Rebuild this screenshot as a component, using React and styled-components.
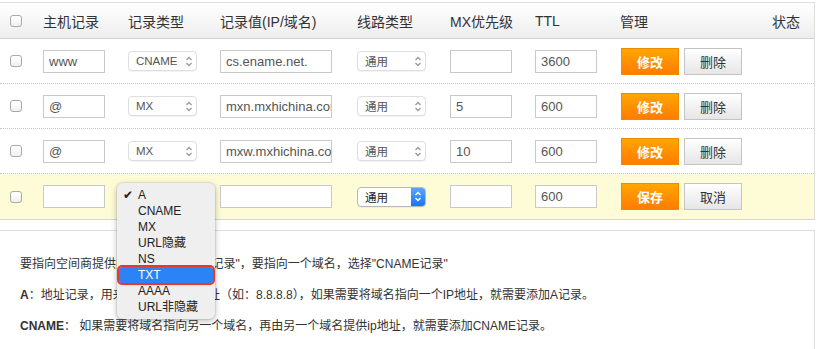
import React from "react"
import styled, { createGlobalStyle } from "styled-components"

const GlobalStyle = createGlobalStyle`
  body {
    margin: 0;
    background: #fff;
    font-family: "Liberation Sans", "Noto Sans CJK SC", sans-serif;
    color: #333;
  }
`

const cols = `43px 85px 92px 137px 93px 85px 85px 140px 1fr`

const Page = styled.div`
  width: 818px;
  height: 349px;
  overflow: hidden;
  padding-top: 2px;
  box-sizing: border-box;
`

const Table = styled.div`
  width: 815px;
  box-sizing: border-box;
  border-top: 1px solid #dedede;
  border-right: 1px solid #dedede;
  border-bottom: 1px solid #d4d4d4;
`

const HeadRow = styled.div`
  display: grid;
  grid-template-columns: ${cols};
  align-items: center;
  height: 35px;
  background: linear-gradient(#ffffff, #eeeeee);
  border-bottom: 1px solid #d2d2d2;
  font-size: 14px;
  color: #333;
`

const HeadCell = styled.div`
  text-align: ${p => (p.$right ? "right" : "left")};
  padding-right: ${p => (p.$right ? "14px" : "0")};
`

const Row = styled.div`
  display: grid;
  grid-template-columns: ${cols};
  align-items: center;
  height: 45px;
  box-sizing: border-box;
  background: ${p => (p.$editing ? "#fefcd6" : "#fff")};
  border-bottom: ${p => (p.$last ? "none" : "1px dotted #c8c8c8")};
`

const Cell = styled.div`
  position: relative;
  display: flex;
  align-items: center;
  gap: 5px;
`

const Check = styled.span`
  display: block;
  width: 12px;
  height: 12px;
  margin-left: 10px;
  box-sizing: border-box;
  border: 1px solid #a9a9a9;
  border-radius: 3px;
  background: linear-gradient(#ffffff, #f1f1f1);
`

const TextBox = styled.div`
  width: ${p => p.$w}px;
  height: 23px;
  box-sizing: border-box;
  border: 1px solid #c9c9c9;
  background: #fff;
  padding: 0 5px;
  font-size: 13px;
  line-height: 21px;
  color: #555;
  white-space: nowrap;
  overflow: hidden;
`

const SelectBox = styled.div`
  display: flex;
  align-items: center;
  width: 69px;
  height: 20px;
  box-sizing: border-box;
  border: 1px solid ${p => (p.$focus ? "#b8b8b8" : "#dedede")};
  border-radius: 4px;
  background: #fff;
  overflow: hidden;
  font-size: 11.5px;
  color: ${p => (p.$focus ? "#222" : "#555")};
  box-shadow: 0 1px 1px rgba(0, 0, 0, 0.05);
`

const SelectText = styled.span`
  flex: 1;
  padding-left: 7px;
  white-space: nowrap;
`

const Arrow = styled.span`
  display: flex;
  align-items: center;
  justify-content: center;
  flex-shrink: 0;
  width: 14px;
  height: 100%;
  background: ${p => (p.$focus ? "linear-gradient(#5aa6ff, #1a74f0)" : "transparent")};
  color: ${p => (p.$focus ? "#fff" : "#999")};
`

const Btn = styled.div`
  width: 58px;
  height: 27px;
  box-sizing: border-box;
  display: flex;
  align-items: center;
  justify-content: center;
  font-size: 13px;
  font-weight: ${p => (p.$primary ? "bold" : "normal")};
  color: ${p => (p.$primary ? "#fff" : "#333")};
  border: 1px solid ${p => (p.$primary ? "#f28a00" : "#c4c4c4")};
  background: ${p =>
    p.$primary
      ? "linear-gradient(#ffa600, #ff7c00)"
      : "linear-gradient(#ffffff, #e6e6e6)"};
  margin-left: ${p => (p.$primary ? "1px" : "0")};
`

const Menu = styled.div`
  position: absolute;
  left: -11px;
  top: -14px;
  width: 98px;
  padding: 4px 0;
  box-sizing: border-box;
  background: #efefef;
  border-radius: 6px;
  box-shadow: 0 2px 6px rgba(0, 0, 0, 0.28), 0 0 0 1px rgba(0, 0, 0, 0.06);
  z-index: 5;
`

const MenuItem = styled.div`
  position: relative;
  height: 16px;
  line-height: 16px;
  font-size: 12px;
  padding-left: 19px;
  margin: 0 2px;
  color: ${p => (p.$active ? "#fff" : "#222")};
  background: ${p => (p.$active ? "#2c83f6" : "transparent")};
  border-radius: ${p => (p.$active ? "3px" : "0")};
  outline: ${p => (p.$active ? "2px solid #e4392c" : "none")};
  box-shadow: ${p => (p.$active ? "0 1px 3px rgba(200,40,30,0.5)" : "none")};
`

const Tick = styled.span`
  position: absolute;
  left: 4px;
  top: 0;
  font-size: 12px;
`

const Notes = styled.div`
  margin-top: 10px;
  width: 815px;
  height: 200px;
  box-sizing: border-box;
  border-top: 1px solid #dedede;
  border-right: 1px solid #dedede;
  padding: 24px 0 0 20px;
`

const Note = styled.p`
  margin: 0 0 13px;
  font-size: 12px;
  line-height: 18px;
  color: #333;
`

const Chevrons = () => (
  <svg width="8" height="11" viewBox="0 0 8 11" fill="none" stroke="currentColor" strokeWidth="1.3">
    <path d="M1.5 4 L4 1.5 L6.5 4" />
    <path d="M1.5 7 L4 9.5 L6.5 7" />
  </svg>
)

const Select = ({ text, focus }) => (
  <SelectBox $focus={focus}>
    <SelectText>{text}</SelectText>
    <Arrow $focus={focus}>
      <Chevrons />
    </Arrow>
  </SelectBox>
)

const records = [
  { host: "www", type: "CNAME", value: "cs.ename.net.", mx: "", ttl: "3600" },
  { host: "@", type: "MX", value: "mxn.mxhichina.com", mx: "5", ttl: "600" },
  { host: "@", type: "MX", value: "mxw.mxhichina.com", mx: "10", ttl: "600" },
]

const types = ["A", "CNAME", "MX", "URL隐藏", "NS", "TXT", "AAAA", "URL非隐藏"]

export default () => {
  return (
    <Page>
      <GlobalStyle />
      <Table>
        <HeadRow>
          <HeadCell><Check /></HeadCell>
          <HeadCell>主机记录</HeadCell>
          <HeadCell>记录类型</HeadCell>
          <HeadCell>记录值(IP/域名)</HeadCell>
          <HeadCell>线路类型</HeadCell>
          <HeadCell>MX优先级</HeadCell>
          <HeadCell>TTL</HeadCell>
          <HeadCell>管理</HeadCell>
          <HeadCell $right>状态</HeadCell>
        </HeadRow>

        {records.map((r, i) => (
          <Row key={i}>
            <Cell><Check /></Cell>
            <Cell><TextBox $w={62}>{r.host}</TextBox></Cell>
            <Cell><Select text={r.type} /></Cell>
            <Cell><TextBox $w={112}>{r.value}</TextBox></Cell>
            <Cell><Select text="通用" /></Cell>
            <Cell><TextBox $w={62}>{r.mx}</TextBox></Cell>
            <Cell><TextBox $w={62}>{r.ttl}</TextBox></Cell>
            <Cell>
              <Btn $primary>修改</Btn>
              <Btn>删除</Btn>
            </Cell>
            <Cell />
          </Row>
        ))}

        {/* new record being added */}
        <Row $editing $last>
          <Cell><Check /></Cell>
          <Cell><TextBox $w={62} /></Cell>
          <Cell>
            <Menu>
              {types.map(t => (
                <MenuItem key={t} $active={t === "TXT"}>
                  {t === "A" && <Tick>✔</Tick>}
                  {t}
                </MenuItem>
              ))}
            </Menu>
          </Cell>
          <Cell><TextBox $w={112} /></Cell>
          <Cell><Select text="通用" focus /></Cell>
          <Cell><TextBox $w={62} /></Cell>
          <Cell><TextBox $w={62}>600</TextBox></Cell>
          <Cell>
            <Btn $primary>保存</Btn>
            <Btn>取消</Btn>
          </Cell>
          <Cell />
        </Row>
      </Table>

      <Notes>
        <Note>要指向空间商提供的IP地址，选择"A记录"，要指向一个域名，选择"CNAME记录"</Note>
        <Note><b>A</b>：地址记录，用来指定域名的IP地址（如：8.8.8.8），如果需要将域名指向一个IP地址，就需要添加A记录。</Note>
        <Note><b>CNAME</b>： 如果需要将域名指向另一个域名，再由另一个域名提供ip地址，就需要添加CNAME记录。</Note>
        <Note><b>MX</b>：如果需要设置邮箱，让邮箱能收到邮件，就需要添加MX记录。</Note>
      </Notes>
    </Page>
  )
}
